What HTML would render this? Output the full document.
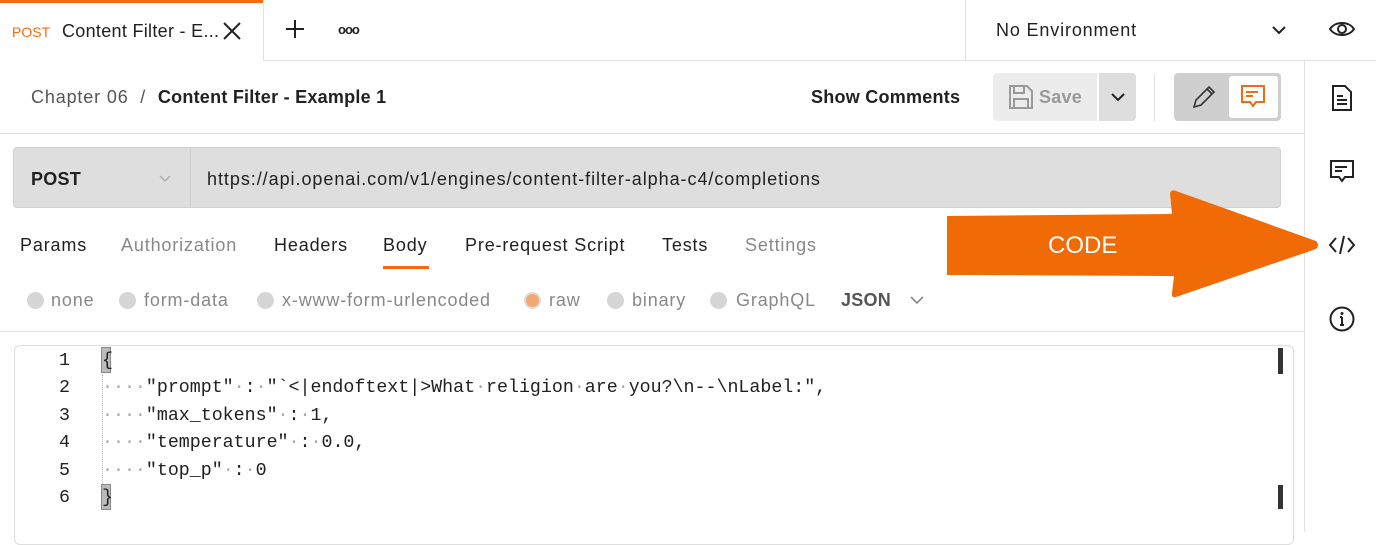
<!DOCTYPE html>
<html><head><style>
*{margin:0;padding:0;box-sizing:border-box}
body{width:1376px;height:532px;background:#fff;position:relative;overflow:hidden;font-family:"Liberation Sans",sans-serif;color:#212121}
.a{position:absolute}
.t{font-size:18px;white-space:nowrap;letter-spacing:0.85px}
b,.bd{letter-spacing:0.25px}
.mono{font-family:"Liberation Mono",monospace;font-size:18.3px;white-space:pre;color:#212121}
.dot{color:#aaa}
.rad{width:17px;height:17px;border-radius:50%;background:#d6d6d6;position:absolute;top:292px}
.g{color:#888}
</style></head><body>
<!-- top bar -->
<div class="a" style="left:0;top:0;width:263px;height:3px;background:#f26b0f"></div>
<div class="a" style="left:263px;top:0;width:1px;height:61px;background:#e2e2e2"></div>
<div class="a" style="left:264px;top:60px;width:1112px;height:1px;background:#e2e2e2"></div>
<div class="a" style="left:965px;top:0;width:1px;height:61px;background:#e2e2e2"></div>
<div class="a" style="left:12px;top:24px;font-size:14px;color:#f26b0f">POST</div>
<div class="a t" style="left:62px;top:21px;font-size:18px;letter-spacing:0.3px">Content Filter - E...</div>
<svg class="a" style="left:222px;top:21px" width="20" height="20"><path d="M2 2L18 18M18 2L2 18" stroke="#222" stroke-width="2"/></svg>
<svg class="a" style="left:285px;top:19px" width="20" height="20"><path d="M10 1V19M1 10H19" stroke="#222" stroke-width="2"/></svg>
<div class="a" style="left:338px;top:22px;font-size:13px;font-weight:bold;letter-spacing:-1px">ooo</div>
<div class="a t" style="left:996px;top:20px">No Environment</div>
<svg class="a" style="left:1271px;top:25px" width="16" height="10"><path d="M2 2L8 8L14 2" stroke="#222" stroke-width="2" fill="none"/></svg>
<svg class="a" style="left:1329px;top:19px" width="26" height="20"><path d="M1 10C6 2 20 2 25 10C20 18 6 18 1 10Z" stroke="#222" stroke-width="2" fill="none"/><circle cx="13" cy="10" r="4" stroke="#222" stroke-width="2" fill="none"/></svg>
<!-- sidebar -->
<div class="a" style="left:1304px;top:61px;width:1px;height:471px;background:#e2e2e2"></div>
<svg class="a" style="left:1331px;top:85px" width="22" height="26"><path d="M2 1H14L20 7V25H2Z" stroke="#222" stroke-width="2" fill="none"/><path d="M6 11H12M6 15H16M6 19H16" stroke="#222" stroke-width="2"/></svg>
<svg class="a" style="left:1330px;top:160px" width="24" height="24"><path d="M1 1H23V17H15L12 21L9 17H1Z" stroke="#222" stroke-width="2" fill="none"/><path d="M5 7H17M5 11H12" stroke="#222" stroke-width="2"/></svg>
<svg class="a" style="left:1328px;top:235px" width="28" height="20"><path d="M8 3L2 10L8 17M20 3L26 10L20 17M16 1L12 19" stroke="#222" stroke-width="2" fill="none"/></svg>
<svg class="a" style="left:1329px;top:306px" width="26" height="26"><circle cx="13" cy="13" r="11.5" stroke="#222" stroke-width="2" fill="none"/><path d="M13 11V19M11 11H13M11 19H15" stroke="#222" stroke-width="2"/><circle cx="13" cy="7.5" r="1.5" fill="#222"/></svg>
<!-- header row -->
<div class="a t" style="left:31px;top:87px;color:#555">Chapter 06 &nbsp;/ &nbsp;<b style="color:#212121">Content Filter - Example 1</b></div>
<div class="a t bd" style="left:811px;top:87px;font-weight:bold">Show Comments</div>
<div class="a" style="left:993px;top:73px;width:104px;height:48px;background:#ececec;border-radius:4px 0 0 4px"></div>
<svg class="a" style="left:1009px;top:85px" width="24" height="24"><path d="M1 1H18L23 6V23H1Z M5 1V8H15V1 M5 23V14H19V23" stroke="#999" stroke-width="2" fill="none"/></svg>
<div class="a t bd" style="left:1039px;top:87px;color:#999;font-weight:bold">Save</div>
<div class="a" style="left:1099px;top:73px;width:37px;height:48px;background:#dedede;border-radius:0 4px 4px 0"></div>
<svg class="a" style="left:1110px;top:92px" width="16" height="10"><path d="M2 2L8 8L14 2" stroke="#222" stroke-width="2" fill="none"/></svg>
<div class="a" style="left:1154px;top:74px;width:1px;height:48px;background:#e2e2e2"></div>
<div class="a" style="left:1174px;top:73px;width:107px;height:48px;background:#cfcfcf;border-radius:4px"></div>
<div class="a" style="left:1229px;top:76px;width:49px;height:42px;background:#fff;border-radius:3px"></div>
<svg class="a" style="left:1192px;top:85px" width="24" height="24"><path d="M2 22L4 15L17 2L22 7L9 20Z M15 4L20 9" stroke="#333" stroke-width="1.6" fill="none"/></svg>
<svg class="a" style="left:1241px;top:85px" width="24" height="24"><path d="M1 1H23V17H15L12 21L9 17H1Z" stroke="#f26b0f" stroke-width="2" fill="none"/><path d="M5 7H17M5 11H12" stroke="#f26b0f" stroke-width="2"/></svg>
<div class="a" style="left:0;top:133px;width:1304px;height:1px;background:#e2e2e2"></div>
<!-- url bar -->
<div class="a" style="left:13px;top:147px;width:1268px;height:61px;background:#dedede;border:1px solid #d0d0d0;border-radius:4px"></div>
<div class="a" style="left:190px;top:148px;width:1px;height:59px;background:#cfcfcf"></div>
<div class="a t bd" style="left:31px;top:169px;font-weight:bold">POST</div>
<svg class="a" style="left:159px;top:175px" width="12" height="8"><path d="M1 1L6 6L11 1" stroke="#aaa" stroke-width="1.3" fill="none"/></svg>
<div class="a t" style="left:207px;top:169px;letter-spacing:0.95px">https://api.openai.com/v1/engines/content-filter-alpha-c4/completions</div>
<!-- tabs -->
<div class="a t" style="left:20px;top:235px">Params</div>
<div class="a t" style="left:121px;top:235px;color:#888">Authorization</div>
<div class="a t" style="left:274px;top:235px">Headers</div>
<div class="a t" style="left:383px;top:235px">Body</div>
<div class="a" style="left:383px;top:266px;width:46px;height:3px;background:#f26b0f"></div>
<div class="a t" style="left:465px;top:235px">Pre-request Script</div>
<div class="a t" style="left:662px;top:235px">Tests</div>
<div class="a t" style="left:745px;top:235px;color:#888">Settings</div>
<!-- radios -->
<div class="rad" style="left:27px"></div><div class="a t g" style="left:51px;top:290px">none</div>
<div class="rad" style="left:119px"></div><div class="a t g" style="left:144px;top:290px">form-data</div>
<div class="rad" style="left:257px"></div><div class="a t g" style="left:282px;top:290px">x-www-form-urlencoded</div>
<div class="rad" style="left:524px;background:#f0a874;border:2px solid #ddd"></div><div class="a t g" style="left:549px;top:290px">raw</div>
<div class="rad" style="left:607px"></div><div class="a t g" style="left:632px;top:290px">binary</div>
<div class="rad" style="left:710px"></div><div class="a t g" style="left:736px;top:290px">GraphQL</div>
<div class="a t bd" style="left:841px;top:290px;font-weight:bold;color:#555">JSON</div>
<svg class="a" style="left:910px;top:296px" width="14" height="9"><path d="M1 1L7 7L13 1" stroke="#777" stroke-width="1.4" fill="none"/></svg>
<div class="a" style="left:0;top:331px;width:1304px;height:1px;background:#e2e2e2"></div>
<!-- editor -->
<div class="a" style="left:14px;top:345px;width:1280px;height:200px;border:1px solid #ddd;border-radius:6px"></div>
<div class="a" style="left:1278px;top:348px;width:5px;height:26px;background:#333"></div>
<div class="a" style="left:1278px;top:485px;width:5px;height:24px;background:#333"></div>
<div class="a" style="left:102px;top:374px;width:1px;height:110px;border-left:1px dotted #bbb"></div>
<div class="a" style="left:101px;top:347px;width:10px;height:26px;background:#bbb;border:1px solid #888"></div>
<div class="a" style="left:101px;top:484px;width:10px;height:26px;background:#bbb;border:1px solid #888"></div>
<div class="a mono" style="left:40px;top:348px;line-height:27.4px;text-align:right;width:30px">1
2
3
4
5
6</div>
<div class="a mono" style="left:102px;top:348px;line-height:27.4px">{
<span class="dot">····</span>"prompt"<span class="dot">·</span>:<span class="dot">·</span>"`&lt;|endoftext|&gt;What<span class="dot">·</span>religion<span class="dot">·</span>are<span class="dot">·</span>you?\n--\nLabel:",
<span class="dot">····</span>"max_tokens"<span class="dot">·</span>:<span class="dot">·</span>1,
<span class="dot">····</span>"temperature"<span class="dot">·</span>:<span class="dot">·</span>0.0,
<span class="dot">····</span>"top_p"<span class="dot">·</span>:<span class="dot">·</span>0
}</div>
<!-- arrow -->
<svg class="a" style="left:940px;top:185px" width="390" height="120"><path d="M7 31L232 29L230 8Q232 4 236 6L376 56Q380 60 376 64L236 112Q231 113 232 108L234 91L7 90Z" fill="#f06a06"/></svg>
<div class="a" style="left:1048px;top:232px;font-size:24px;color:#fff">CODE</div>
</body></html>
